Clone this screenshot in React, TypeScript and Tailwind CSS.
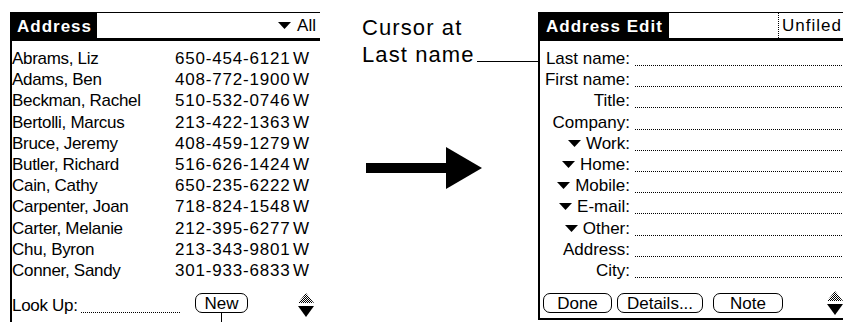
import React from 'react';

const people = [
  ['Abrams, Liz', '650-454-6121'],
  ['Adams, Ben', '408-772-1900'],
  ['Beckman, Rachel', '510-532-0746'],
  ['Bertolli, Marcus', '213-422-1363'],
  ['Bruce, Jeremy', '408-459-1279'],
  ['Butler, Richard', '516-626-1424'],
  ['Cain, Cathy', '650-235-6222'],
  ['Carpenter, Joan', '718-824-1548'],
  ['Carter, Melanie', '212-395-6277'],
  ['Chu, Byron', '213-343-9801'],
  ['Conner, Sandy', '301-933-6833'],
];

const fields: { label: string; drop?: boolean }[] = [
  { label: 'Last name:' },
  { label: 'First name:' },
  { label: 'Title:' },
  { label: 'Company:' },
  { label: 'Work:', drop: true },
  { label: 'Home:', drop: true },
  { label: 'Mobile:', drop: true },
  { label: 'E-mail:', drop: true },
  { label: 'Other:', drop: true },
  { label: 'Address:' },
  { label: 'City:' },
];

function DownTri() {
  return (
    <svg width="13" height="7" viewBox="0 0 13 7" className="shrink-0">
      <polygon points="0,0 13,0 6.5,7" fill="black" />
    </svg>
  );
}

function ScrollArrows() {
  return (
    <svg width="16" height="24" viewBox="0 0 16 24" className="shrink-0">
      <defs>
        <pattern id="dither" width="2" height="2" patternUnits="userSpaceOnUse">
          <rect width="1" height="1" fill="black" />
          <rect x="1" y="1" width="1" height="1" fill="black" />
        </pattern>
      </defs>
      <polygon points="8,0 16,10 0,10" fill="url(#dither)" />
      <polygon points="0,13 16,13 8,24" fill="black" />
    </svg>
  );
}

function PalmButton({ label, width }: { label: string; width: string }) {
  return (
    <div className={`${width} h-[20px] border border-black rounded-[7px] flex items-center justify-center leading-none`}>
      {label}
    </div>
  );
}

export default function App() {
  return (
    <div className="w-[843px] h-[322px] overflow-hidden bg-white text-black flex font-['Liberation_Sans',Arial,sans-serif] text-[17px]">
      {/* address list screen */}
      <div className="ml-[10px] mt-[12px] w-[310px] h-[310px] shrink-0 border-l-2 border-t border-black flex flex-col">
        <div className="h-[28px] border-b-[3px] border-black flex items-stretch">
          <div className="bg-black text-white font-bold tracking-[1px] px-[5px] pt-[2px] leading-[23px]">Address</div>
          <div className="ml-auto flex items-center gap-[6px] pr-[4px]">
            <DownTri />
            <span className="leading-none">All</span>
          </div>
        </div>
        <div className="pt-[7px]">
          {people.map(([name, phone]) => (
            <div key={name} className="flex h-[21.2px] leading-[21.2px]">
              <span className="w-[163px] shrink-0 whitespace-nowrap tracking-[-0.3px]">{name}</span>
              <span className="w-[118px] tracking-[0.8px] whitespace-nowrap">{phone}</span>
              <span>W</span>
            </div>
          ))}
        </div>
        <div className="mt-auto mb-[5px] h-[24px] flex">
          <div className="w-[168px] self-end flex items-end mb-[1px]">
            <span className="leading-[20px] whitespace-nowrap tracking-[-0.3px]">Look Up:</span>
            <div className="flex-1 mb-[3px] ml-[3px] border-b border-dotted border-black" />
          </div>
          <div className="ml-[15px] self-start flex flex-col">
            <PalmButton label="New" width="w-[53px]" />
            <div className="w-px h-[10px] bg-black mx-auto" />
          </div>
          <div className="ml-[50px]">
            <ScrollArrows />
          </div>
        </div>
      </div>

      {/* middle caption and arrow */}
      <div className="w-[218px] shrink-0 flex flex-col pt-[14px] text-[22px] tracking-[1.1px]">
        <div className="pl-[42px] leading-[27px]">Cursor at</div>
        <div className="pl-[42px] flex items-end leading-[27px]">
          <span className="whitespace-nowrap">Last name</span>
          <div className="flex-1 h-px bg-black mb-[6px] ml-[2px]" />
        </div>
        <svg width="116" height="42" viewBox="0 0 116 42" className="ml-[46px] mt-[79px]">
          <rect x="0" y="16" width="81" height="10" fill="black" />
          <polygon points="80,0 116,21 80,42" fill="black" />
        </svg>
      </div>

      {/* address edit screen */}
      <div className="mt-[12px] w-[310px] h-[308px] shrink-0 border-l-2 border-t border-b-2 border-black flex flex-col">
        <div className="h-[28px] border-b-[3px] border-black flex items-stretch">
          <div className="bg-black text-white font-bold tracking-[1px] px-[6px] pt-[2px] leading-[23px] whitespace-nowrap">Address Edit</div>
          <div className="ml-auto w-[70px] -mt-px border-l border-t border-dotted border-black pl-[3px] tracking-[1px] leading-[25px] whitespace-nowrap">
            Unfiled
          </div>
        </div>
        <div className="pt-[7px]">
          {fields.map((f) => (
            <div key={f.label} className="flex h-[21.2px]">
              <div className="w-[90px] shrink-0 flex items-center justify-end leading-[21.2px] whitespace-nowrap">
                {f.drop && (
                  <span className="mr-[5px] flex">
                    <DownTri />
                  </span>
                )}
                {f.label}
              </div>
              <div className="flex-1 ml-[5px] h-[18px] border-b border-dotted border-black" />
            </div>
          ))}
        </div>
        <div className="mt-auto mb-[5px] h-[20px] flex items-center gap-[5px] pl-[3px]">
          <PalmButton label="Done" width="w-[69px]" />
          <PalmButton label="Details..." width="w-[86px]" />
          <div className="ml-[5px]">
            <PalmButton label="Note" width="w-[70px]" />
          </div>
          <div className="ml-[39px]">
            <ScrollArrows />
          </div>
        </div>
      </div>
    </div>
  );
}
